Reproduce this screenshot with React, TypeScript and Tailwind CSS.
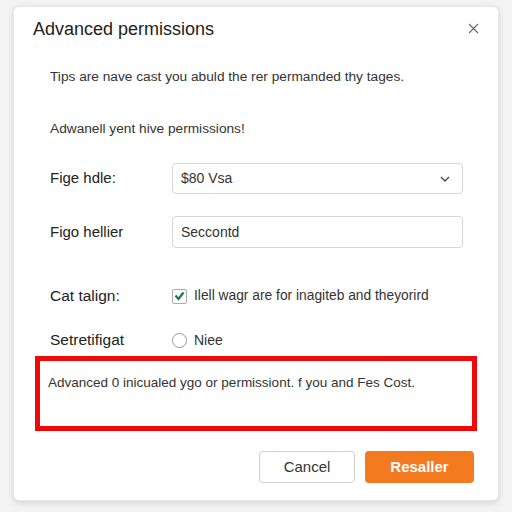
import React from "react";

export default function App() {
  const font = { fontFamily: '"Liberation Sans", Arial, sans-serif' };
  return (
    <div className="w-[512px] h-[512px] bg-[#f3f3f3] pl-[13px] pt-[6px] overflow-hidden" style={font}>
      <div className="relative w-[486px] h-[495px] bg-white rounded-[6px] border border-[#e6e6e6] shadow-[0_2px_6px_rgba(0,0,0,0.12)] flex flex-col">
        <div className="flex items-center justify-between pl-[19px] pr-[19px] pt-[10px] h-[34px]">
          <div className="text-[18px] leading-[24px] text-[#222]">Advanced permissions</div>
          <svg width="11" height="11" viewBox="0 0 11 11" className="mt-[-2px]">
            <path d="M1 1L10 10M10 1L1 10" stroke="#666" strokeWidth="1.1" />
          </svg>
        </div>
        <div className="pl-[36px] mt-[26px] text-[13.7px] leading-[20px] text-[#333]">
          Tips are nave cast you abuld the rer permanded thy tages.
        </div>
        <div className="pl-[36px] mt-[32px] text-[13.7px] leading-[20px] text-[#333]">
          Adwanell yent hive permissions!
        </div>
        <div className="flex items-center pl-[36px] mt-[24px]">
          <div className="w-[122px] text-[15px] text-[#222]">Fige hdle:</div>
          <div className="w-[291px] h-[31px] border border-[#d6d6d6] rounded-[4px] flex items-center justify-between pl-[8px] pr-[12px]">
            <span className="text-[14px] text-[#333]">$80 Vsa</span>
            <svg width="10" height="6" viewBox="0 0 10 6">
              <path d="M1 1L5 5L9 1" stroke="#444" strokeWidth="1.3" fill="none" />
            </svg>
          </div>
        </div>
        <div className="flex items-center pl-[36px] mt-[22px]">
          <div className="w-[122px] text-[15px] text-[#222]">Figo hellier</div>
          <div className="w-[291px] h-[32px] border border-[#d6d6d6] rounded-[4px] flex items-center pl-[8px]">
            <span className="text-[14px] text-[#333]">Seccontd</span>
          </div>
        </div>
        <div className="flex items-center pl-[36px] mt-[38px] h-[20px]">
          <div className="w-[122px] text-[15.5px] text-[#222]">Cat talign:</div>
          <div className="w-[15px] h-[15px] border border-[#aaa] rounded-[2px] flex items-center justify-center">
            <svg width="11" height="10" viewBox="0 0 11 10">
              <path d="M1.5 4.5L4.5 8L9.5 1.5" stroke="#137a5e" strokeWidth="2.2" fill="none" />
            </svg>
          </div>
          <span className="ml-[7px] text-[13.8px] text-[#333]">Ilell wagr are for inagiteb and theyorird</span>
        </div>
        <div className="flex items-center pl-[36px] mt-[24px] h-[20px]">
          <div className="w-[122px] text-[15.5px] text-[#222]">Setretifigat</div>
          <div className="w-[15px] h-[15px] border border-[#999] rounded-full" />
          <span className="ml-[7px] text-[14px] text-[#333]">Niee</span>
        </div>
        <div className="ml-[21px] mt-[6px] w-[442px] h-[75px] border-[5px] border-[#ee0a0a] pl-[8px] pt-[12px]">
          <div className="text-[13.5px] leading-[20px] text-[#333]">
            Advanced 0 inicualed ygo or permissiont. f you and Fes Cost.
          </div>
        </div>
        <div className="flex justify-end gap-[10px] pr-[24px] mt-[20px]">
          <div className="w-[96px] h-[32px] border border-[#d0d0d0] rounded-[4px] flex items-center justify-center text-[15px] text-[#333]">
            Cancel
          </div>
          <div className="w-[109px] h-[32px] bg-[#f47a20] rounded-[4px] flex items-center justify-center text-[15px] font-bold text-white">
            Resaller
          </div>
        </div>
      </div>
    </div>
  );
}
